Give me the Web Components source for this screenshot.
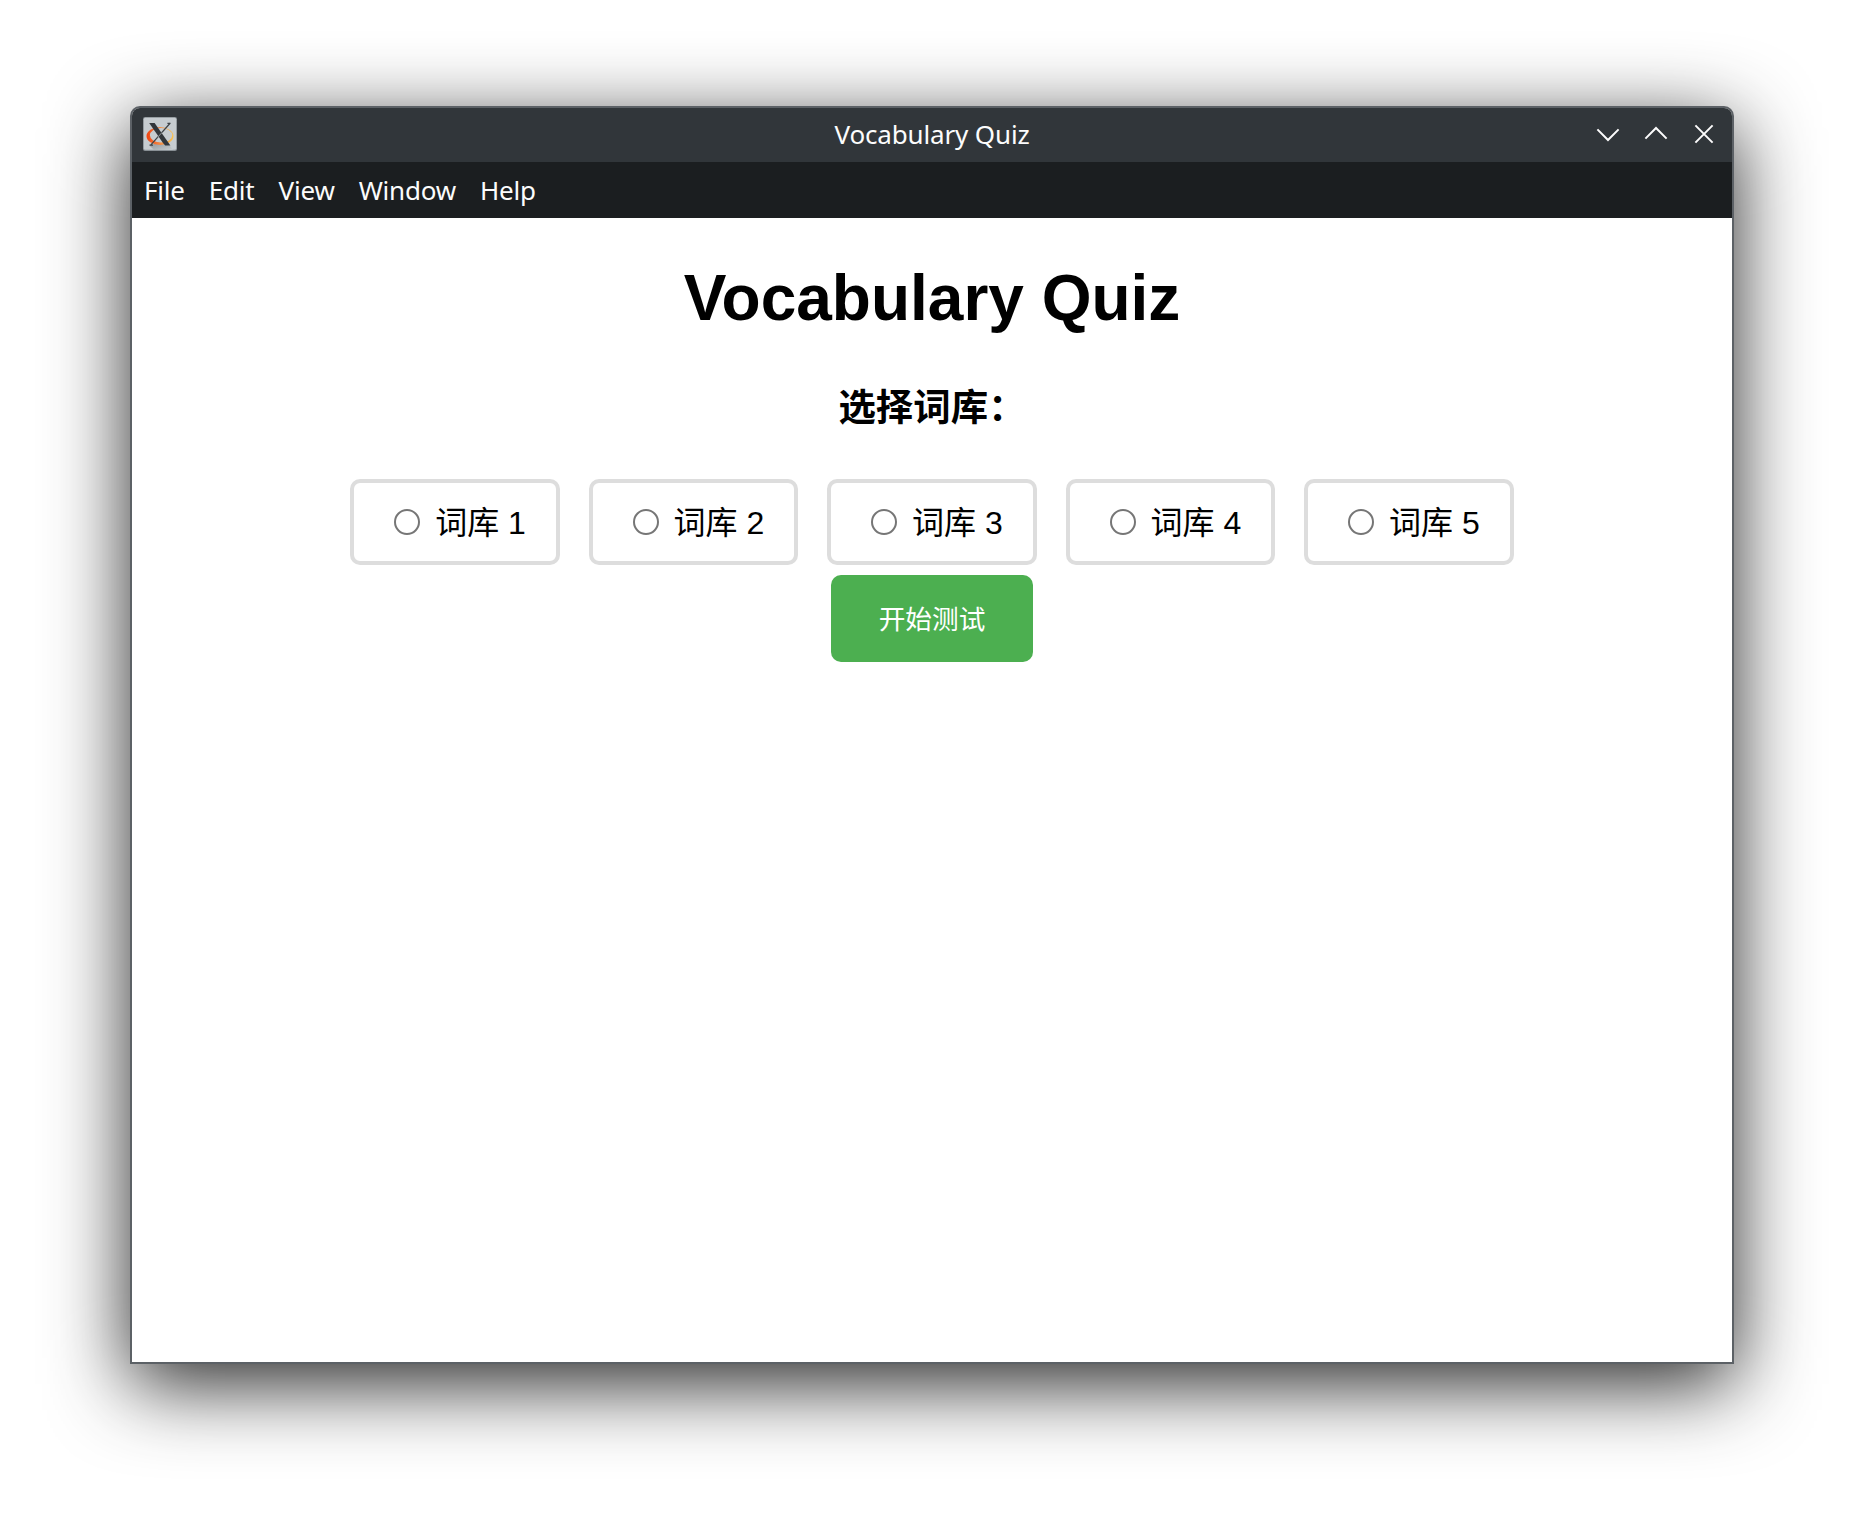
<!DOCTYPE html>
<html lang="zh-CN">
<head>
<meta charset="utf-8">
<title>Vocabulary Quiz</title>
<style>
html, body { margin: 0; height: 100%; background: #fff; overflow: hidden; }
body { font-family: "Liberation Sans", "Noto Sans CJK SC", sans-serif; color: #000; }
</style>
</head>
<body>
<quiz-desktop>
  <app-window>
    <title-bar slot="title">Vocabulary Quiz</title-bar>
    <menu-bar slot="menu">
      <menu-entry>File</menu-entry><menu-entry>Edit</menu-entry><menu-entry>View</menu-entry><menu-entry>Window</menu-entry><menu-entry>Help</menu-entry>
    </menu-bar>
    <quiz-page heading="Vocabulary Quiz" prompt="选择词库：">
      <quiz-option>词库 1</quiz-option><quiz-option>词库 2</quiz-option><quiz-option>词库 3</quiz-option><quiz-option>词库 4</quiz-option><quiz-option>词库 5</quiz-option>
      <start-button slot="action">开始测试</start-button>
    </quiz-page>
  </app-window>
</quiz-desktop>
<script>
const define = (name, html) => customElements.define(name, class extends HTMLElement {
  constructor() {
    super();
    this.attachShadow({ mode: 'open' }).innerHTML = html;
  }
  connectedCallback() {
    for (const el of this.shadowRoot.querySelectorAll('[data-attr]'))
      el.textContent = this.getAttribute(el.dataset.attr);
  }
});

define('quiz-desktop', `
<style>
:host { display: block; box-sizing: border-box; width: 1864px; height: 1518px; padding: 106px 130px 154px; }
</style><slot></slot>`);

define('app-window', `
<style>
:host { display: flex; flex-direction: column; box-sizing: border-box; width: 1604px; height: 1258px;
  border: 2px solid #5c6166; border-radius: 10px 10px 0 0; background: #fff;
  box-shadow: 0 20px 80px rgba(0,0,0,.85); }
</style><slot name="title"></slot><slot name="menu"></slot><slot></slot>`);

define('title-bar', `
<style>
:host { display: grid; grid-template-columns: 1fr auto 1fr; align-items: center; height: 54px;
  box-sizing: border-box; padding-bottom: 2px;
  background: #31363a; border-radius: 8px 8px 0 0; color: #fcfcfc;
  font: 26px/52px "Noto Sans", sans-serif; letter-spacing: -.15px; }
.app { width: 34px; height: 34px; margin-left: 11px; display: block; }
.buttons { display: flex; justify-content: flex-end; gap: 16px; padding-right: 12px; }
.buttons svg { width: 32px; height: 32px; fill: none; stroke: #fcfcfc; stroke-width: 2; }
</style>
<svg class="app" viewBox="0 0 34 34">
  <defs>
    <linearGradient id="ring"><stop offset="0" stop-color="#f0420f"/><stop offset=".5" stop-color="#f28a45"/><stop offset="1" stop-color="#fcc44c"/></linearGradient>
    <linearGradient id="shade" x1="0" y1="0" x2="1" y2="1"><stop offset="0" stop-color="#8f9599"/><stop offset="1" stop-color="#c5cbce"/></linearGradient>
  </defs>
  <rect width="34" height="34" rx="2" fill="#899095"/>
  <rect x=".8" y=".8" width="32.4" height="32" rx="1.5" fill="#c6ccd0"/>
  <path d="M7 29L14 25L27 29L30 33H11Z" fill="url(#shade)"/>
  <path fill="url(#ring)" fill-rule="evenodd" d="M3.5 19a13.5 9 0 1 0 27 0a13.5 9 0 1 0-27 0M6.9 18.300a11.200 7.200 0 1 1 22.400 0a11.200 7.200 0 1 1-22.400 0"/>
  <path d="M6.200 6H11.600L27.400 28.600H22.200L20 26Z" fill="#31363b"/>
  <path d="M27.300 6L7.200 28.700M6.500 28.200H10M24.400 6.400H27.500" stroke="#3d4246" stroke-width="1.200" fill="none"/>
  <path d="M19.200 15.300L14.800 20.200" stroke="#a9afb3" stroke-width=".7"/>
</svg>
<span><slot></slot></span>
<div class="buttons">
  <svg viewBox="0 0 32 32"><path d="M5.400 11.400L16 22L26.600 11.400"/></svg>
  <svg viewBox="0 0 32 32"><path d="M5.400 20.600L16 10L26.600 20.600"/></svg>
  <svg viewBox="0 0 32 32"><path d="M7.400 7.400L24.600 24.600M24.600 7.400L7.400 24.600"/></svg>
</div>`);

define('menu-bar', `
<style>
:host { display: flex; gap: 24px; height: 56px; box-sizing: border-box; padding: 1px 0 0 12px; background: #1b1e20; color: #fcfcfc;
  font: 26px/55px "Noto Sans", sans-serif; letter-spacing: -.2px; }
</style><slot></slot>`);

define('menu-entry', `
<style>:host { display: block; }</style><slot></slot>`);

define('quiz-page', `
<style>
:host { display: flex; flex-direction: column; align-items: center; flex: 1; min-height: 0; padding-top: 43px; }
h1 { margin: 0; font-size: 64px; line-height: 74px; }
h3 { margin: 46px 0 0; font-size: 37.44px; line-height: 54px; }
.options { display: flex; gap: 28.9px; margin: 44px 0 10px; }
</style>
<h1 data-attr="heading"></h1>
<h3 data-attr="prompt"></h3>
<div class="options"><slot></slot></div>
<slot name="action"></slot>`);

define('quiz-option', `
<style>
:host { display: block; }
label { display: flex; align-items: center; box-sizing: border-box; height: 86px; padding: 0 30px;
  border: 4px solid #ddd; border-radius: 10px; font-size: 32px; line-height: 46px; white-space: nowrap; }
input { appearance: none; box-sizing: border-box; width: 26px; height: 26px; margin: 0 14.9px 0 10px;
  border: 2px solid #767676; border-radius: 50%; background: #fff; }
span { padding-top: 2px; }
</style><label><input type="radio" name="bank"><span><slot></slot></span></label>`);

define('start-button', `
<style>
:host { display: block; }
button { display: block; height: 87px; padding: 4px 48px 0; border: 0; border-radius: 10px; background: #4caf50;
  color: #fff; font: 26.67px/39px "Liberation Sans", "Noto Sans CJK SC", sans-serif; }
</style><button><slot></slot></button>`);
</script>
</body>
</html>
